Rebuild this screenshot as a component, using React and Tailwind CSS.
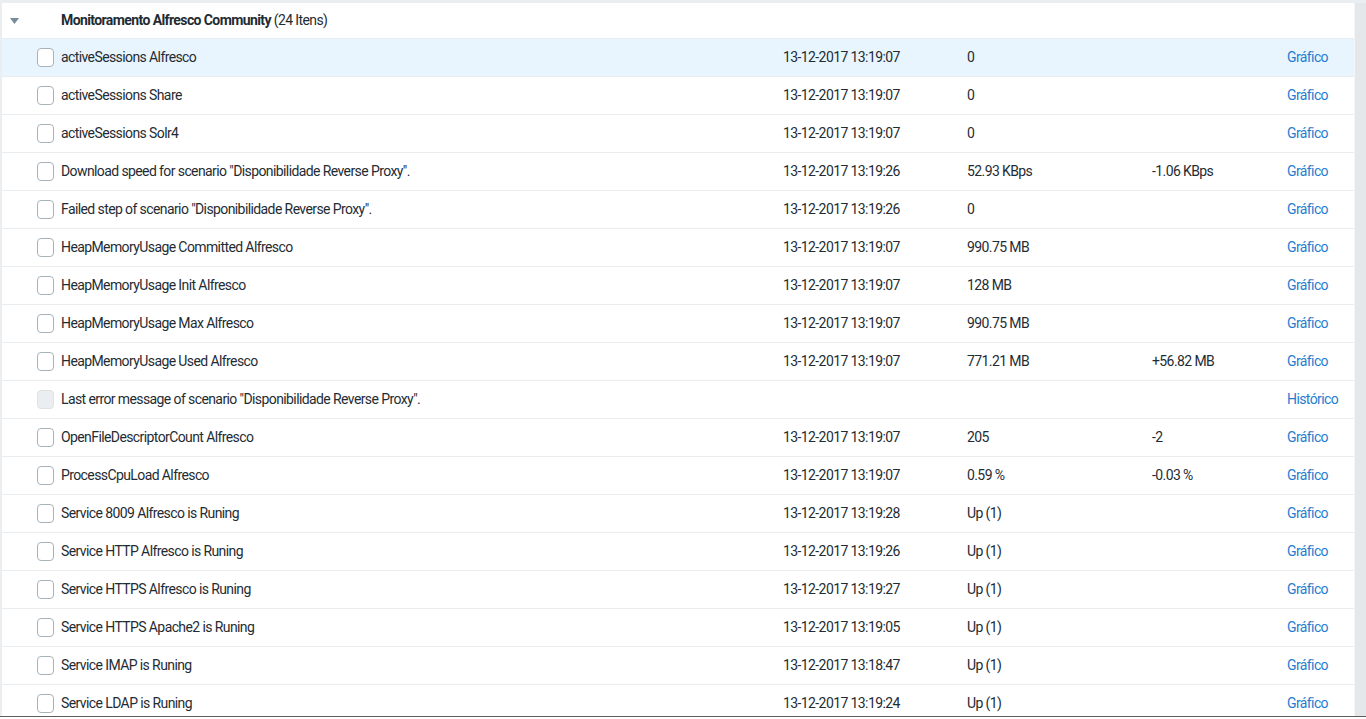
import { useState } from "react";

const rows = [
  { name: "activeSessions Alfresco", date: "13-12-2017 13:19:07", value: "0", change: "", link: "Gráfico" },
  { name: "activeSessions Share", date: "13-12-2017 13:19:07", value: "0", change: "", link: "Gráfico" },
  { name: "activeSessions Solr4", date: "13-12-2017 13:19:07", value: "0", change: "", link: "Gráfico" },
  { name: 'Download speed for scenario "Disponibilidade Reverse Proxy".', date: "13-12-2017 13:19:26", value: "52.93 KBps", change: "-1.06 KBps", link: "Gráfico" },
  { name: 'Failed step of scenario "Disponibilidade Reverse Proxy".', date: "13-12-2017 13:19:26", value: "0", change: "", link: "Gráfico" },
  { name: "HeapMemoryUsage Committed Alfresco", date: "13-12-2017 13:19:07", value: "990.75 MB", change: "", link: "Gráfico" },
  { name: "HeapMemoryUsage Init Alfresco", date: "13-12-2017 13:19:07", value: "128 MB", change: "", link: "Gráfico" },
  { name: "HeapMemoryUsage Max Alfresco", date: "13-12-2017 13:19:07", value: "990.75 MB", change: "", link: "Gráfico" },
  { name: "HeapMemoryUsage Used Alfresco", date: "13-12-2017 13:19:07", value: "771.21 MB", change: "+56.82 MB", link: "Gráfico" },
  { name: 'Last error message of scenario "Disponibilidade Reverse Proxy".', date: "", value: "", change: "", link: "Histórico", disabled: true },
  { name: "OpenFileDescriptorCount Alfresco", date: "13-12-2017 13:19:07", value: "205", change: "-2", link: "Gráfico" },
  { name: "ProcessCpuLoad Alfresco", date: "13-12-2017 13:19:07", value: "0.59 %", change: "-0.03 %", link: "Gráfico" },
  { name: "Service 8009 Alfresco is Runing", date: "13-12-2017 13:19:28", value: "Up (1)", change: "", link: "Gráfico" },
  { name: "Service HTTP Alfresco is Runing", date: "13-12-2017 13:19:26", value: "Up (1)", change: "", link: "Gráfico" },
  { name: "Service HTTPS Alfresco is Runing", date: "13-12-2017 13:19:27", value: "Up (1)", change: "", link: "Gráfico" },
  { name: "Service HTTPS Apache2 is Runing", date: "13-12-2017 13:19:05", value: "Up (1)", change: "", link: "Gráfico" },
  { name: "Service IMAP is Runing", date: "13-12-2017 13:18:47", value: "Up (1)", change: "", link: "Gráfico" },
  { name: "Service LDAP is Runing", date: "13-12-2017 13:19:24", value: "Up (1)", change: "", link: "Gráfico" },
];

const ItemRow = ({ row, active }) => {
  return (
    <div
      className={`grid grid-cols-[59px_722px_184px_185px_135px_1fr] items-center h-[38px] shrink-0 border-b border-[#ebeef0] ${
        active ? "bg-[#e8f5ff]" : "bg-white"
      }`}>
      <div className="pl-[35px] flex items-center">
        <span
          className={`w-[17px] h-[19px] rounded-[4px] border ${
            row.disabled ? "bg-[#ebeef0] border-[#dde2e5]" : "bg-white border-[#a7b3ba]"
          }`}
        />
      </div>
      <p className="whitespace-nowrap">{row.name}</p>
      <p>{row.date}</p>
      <p>{row.value}</p>
      <p>{row.change}</p>
      <a className="text-[#1f7dcf] cursor-pointer whitespace-nowrap">{row.link}</a>
    </div>
  );
};

const App = () => {
  const [open] = useState(true);

  return (
    <div
      className="w-[1366px] h-[719px] overflow-hidden flex flex-col bg-[#ebeef0] text-[14px] tracking-[-0.6px] text-[#1f2c33]"
      style={{ fontFamily: "Roboto, sans-serif" }}>
      <div className="flex flex-1 min-h-0 pt-[3px]">
        <div className="w-[1352px] ml-[2px] flex flex-col bg-white overflow-hidden">
          <div className="flex items-center h-[36px] shrink-0 border-b border-[#ebeef0]">
            <div className="w-[59px] pl-[8px] flex items-center">
              <svg width="9" height="6" viewBox="0 0 9 6">
                <path d="M0 0 L9 0 L4.5 6 Z" fill="#768d99" />
              </svg>
            </div>
            <p>
              <span className="font-bold">Monitoramento Alfresco Community</span> (24 Itens)
            </p>
          </div>
          {open &&
            rows.map((row, i) => <ItemRow key={row.name} row={row} active={i === 0} />)}
        </div>
        <div className="w-[12px] border-l border-[#f4f5f6] bg-[#e5e8eb]" />
      </div>
      <div className="h-[3px] shrink-0 border-t border-[#5e5e5e] bg-white" />
    </div>
  );
};

export default App;
